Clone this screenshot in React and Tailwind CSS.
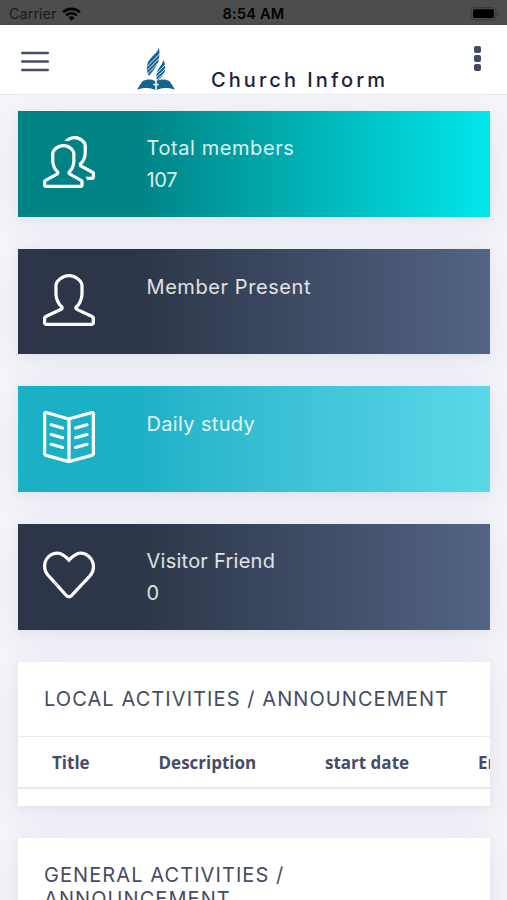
import { SlUser, SlPeople, SlBookOpen, SlHeart } from "react-icons/sl";

const stats = [
  { label: "Total members", value: "107", icon: SlPeople, tone: "teal", height: "h-[106.5px]", tracking: "tracking-[0.58px]", valueTracking: "tracking-[-0.3px]" },
  { label: "Member Present", value: "", icon: SlUser, tone: "dark", height: "h-[105.2px]", tracking: "tracking-[0.58px]", valueTracking: "" },
  { label: "Daily study", value: "", icon: SlBookOpen, tone: "cyan", height: "h-[105.2px]", tracking: "tracking-[0.35px]", valueTracking: "" },
  { label: "Visitor Friend", value: "0", icon: SlHeart, tone: "dark", height: "h-[106.2px]", tracking: "tracking-[0.25px]", valueTracking: "" },
];

const columns = [
  { label: "Title", width: "w-[106.5px]" },
  { label: "Description", width: "w-[166.5px]" },
  { label: "start date", width: "w-[153px]" },
  { label: "End date", width: "w-[120px]" },
];

function toneClass(tone) {
  if (tone === "teal") return "bg-linear-to-r from-[#008385] from-25% to-[#00e7eb]";
  if (tone === "cyan") return "bg-linear-to-r from-[#1cb0c6] from-25% to-[#5ad8e8]";
  return "bg-linear-to-r from-[#2c3648] from-25% to-[#536485]";
}

function StatusBar() {
  return (
    <div className="flex h-[25px] items-center justify-between bg-[#4d4d4d] pt-[2px] pr-[7px] pl-[9px] text-black">
      <div className="flex w-40 items-center gap-[5px]">
        <span className="pt-px text-[14.5px] leading-none text-[#1a1a1a]">Carrier</span>
        <svg width="19" height="14" viewBox="0 0 19 14" fill="none" stroke="black">
          <path d="M1.2 5.2a12 12 0 0 1 16.6 0" strokeWidth="2.7" />
          <path d="M4.2 8.4a7.6 7.6 0 0 1 10.6 0" strokeWidth="2.5" />
          <path d="M9.5 13.5 6.5 10.7a4.4 4.4 0 0 1 6 0Z" fill="black" stroke="none" />
        </svg>
      </div>
      <span className="mr-[2px] pt-px text-[14.5px] leading-none font-semibold tracking-[0.25px]">8:54 AM</span>
      <div className="flex w-40 justify-end">
        <svg width="30" height="14" viewBox="0 0 30 14">
          <rect x="1" y="0.7" width="25" height="12" rx="3.5" fill="none" stroke="#383838" />
          <rect x="3" y="2.2" width="21" height="8.8" rx="1.8" fill="black" />
          <path d="M27.5 4.7v4q1.5-.6 1.5-2t-1.5-2" fill="#383838" />
        </svg>
      </div>
    </div>
  );
}

function Logo() {
  return (
    <svg width="38" height="44" viewBox="0 0 38 44">
      <g fill="#14648f">
        <path d="M22 .5C20 8 9.800 11 9.800 20.500c0 3 .7 6 1.900 8.500l3-3.500C19 20 24 15 22 .5Z" />
        <path d="M26.500 13C24.500 20 19.300 22 19.300 29l.7 6c3-4 8.500-7 8.200-14.500-.1-3-.7-5-1.700-7.500Z" />
        <path d="M0 42.500 5.200 34.500c4.300-2.700 9-2.400 12.300-.7l1.500 1 1.500-1c3.300-1.700 8-2 12.300.7l5.200 8c-5.500-1.900-11.500-2.200-16.500-.3L19 43l-2.500-.8c-5-1.900-11-1.600-16.500.3Z" />
      </g>
      <g stroke="white" strokeWidth="0.9" fill="none">
        <path d="m9 20.500 14-14M9.500 24l14-14M10 27.500l13.500-14" />
        <path d="m18.500 27.500 10.500-10.500M18.500 31l11.500-11M19 34l11-10.500" />
        <path d="M19 34V43M16.300 37.500h5.400" strokeWidth="1.5" />
      </g>
    </svg>
  );
}

function Header() {
  return (
    <header className="flex h-[70px] items-start border-b border-[#e4e7ed] bg-white pr-[26px] pl-[21px]">
      <button className="mt-[26px] w-7" aria-label="Menu">
        <svg width="28" height="22" viewBox="0 0 28 22" stroke="#464c67" strokeWidth="2.6" strokeLinecap="round">
          <path d="M1.3 2h25.400M1.300 10.500h25.400M1.300 19h25.400" />
        </svg>
      </button>
      <div className="mt-[22px] ml-[88px]">
        <Logo />
      </div>
      <h1 className="mt-[42px] ml-[36px] text-[20px] leading-[26px] font-medium tracking-[3.05px] whitespace-nowrap text-[#1c2240]">
        Church Inform
      </h1>
      <button className="mt-[21px] ml-auto flex flex-col gap-[2px]" aria-label="More">
        <span className="size-[7px] rounded-[2px] bg-[#414967]" />
        <span className="size-[7px] rounded-[2px] bg-[#414967]" />
        <span className="size-[7px] rounded-[2px] bg-[#414967]" />
      </button>
    </header>
  );
}

function StatCard({ stat }) {
  const Icon = stat.icon;

  return (
    <div className={"flex shrink-0 pt-[25px] pl-[25.3px] text-white shadow-[0_10px_40px_0_rgba(62,57,107,0.07),0_2px_9px_0_rgba(62,57,107,0.06)] " + stat.height + " " + toneClass(stat.tone)}>
      <Icon className="size-[52px]" />
      <div className="ml-[51.2px] -mt-[3.6px] text-[20px] leading-8 text-white/85">
        <div className={stat.tracking}>{stat.label}</div>
        {stat.value && <div className={stat.valueTracking}>{stat.value}</div>}
      </div>
    </div>
  );
}

function Panel({ title, className, children }) {
  return (
    <section className={"shrink-0 overflow-hidden bg-white shadow-[0_10px_40px_0_rgba(62,57,107,0.07),0_2px_9px_0_rgba(62,57,107,0.06)] " + className}>
      <h2 className="px-[26px] pt-[25px] pb-[25px] text-[20px] leading-[24px] tracking-[1.08px] text-[#464c63]">{title}</h2>
      {children}
    </section>
  );
}

export default function App() {
  return (
    <div className="flex h-[900px] w-[507px] flex-col overflow-hidden bg-[#f4f5fa] font-['Inter',sans-serif]">
      <StatusBar />
      <Header />
      <main className="flex min-h-0 flex-1 flex-col gap-8 overflow-hidden pt-[15.7px] pr-[17px] pl-[18px]">
        {stats.map((stat) => (
          <StatCard key={stat.label} stat={stat} />
        ))}

        <Panel title="LOCAL ACTIVITIES / ANNOUNCEMENT" className="h-[144.2px]">
          <div className="flex h-[53px] w-[560px] items-center border-t border-b-2 border-[#e3ebf3] pt-px pl-[34px] font-['Open_Sans',sans-serif] text-[17px] font-bold text-[#464c67]">
            {columns.map((col) => (
              <div key={col.label} className={"shrink-0 " + col.width}>{col.label}</div>
            ))}
          </div>
        </Panel>

        <Panel title="GENERAL ACTIVITIES / ANNOUNCEMENT" className="h-[170px] pr-[100px]" />
      </main>
    </div>
  );
}
